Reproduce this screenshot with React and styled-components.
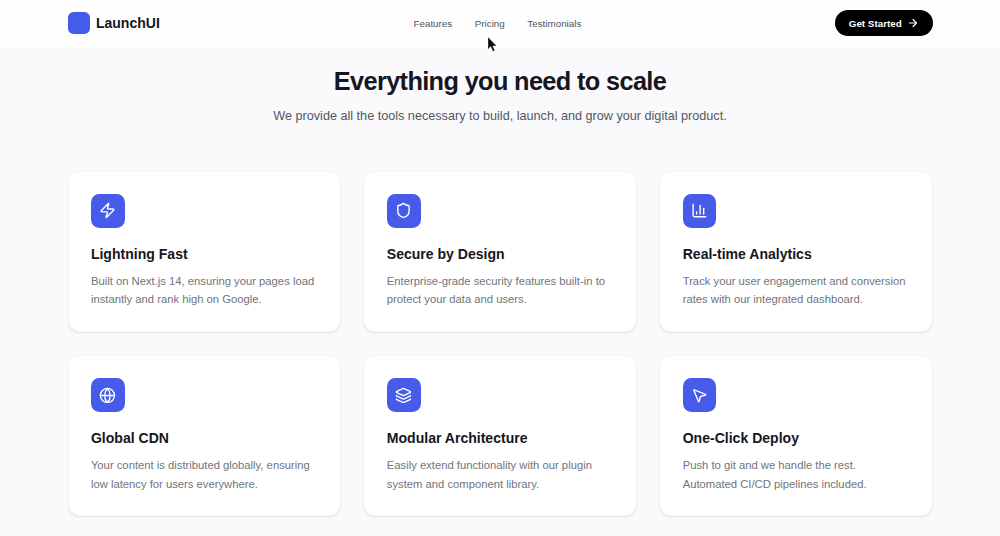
import React from "react";
import styled, { createGlobalStyle } from "styled-components";
import {
  ArrowRight,
  ChartColumn,
  Globe,
  Layers,
  MousePointer2,
  Shield,
  Zap,
} from "lucide-react";

const navLinks = ["Features", "Pricing", "Testimonials"];

const features = [
  {
    icon: Zap,
    title: "Lightning Fast",
    text: "Built on Next.js 14, ensuring your pages load instantly and rank high on Google.",
  },
  {
    icon: Shield,
    title: "Secure by Design",
    text: "Enterprise-grade security features built-in to protect your data and users.",
  },
  {
    icon: ChartColumn,
    title: "Real-time Analytics",
    text: "Track your user engagement and conversion rates with our integrated dashboard.",
  },
  {
    icon: Globe,
    title: "Global CDN",
    text: "Your content is distributed globally, ensuring low latency for users everywhere.",
  },
  {
    icon: Layers,
    title: "Modular Architecture",
    text: "Easily extend functionality with our plugin system and component library.",
  },
  {
    icon: MousePointer2,
    title: "One-Click Deploy",
    text: "Push to git and we handle the rest. Automated CI/CD pipelines included.",
  },
];

function App() {
  return (
    <>
      <GlobalStyle />
      <Header>
        <Logo>
          <LogoMark />
          LaunchUI
        </Logo>
        <Nav>
          {navLinks.map((link) => (
            <NavLink key={link} href="#">
              {link}
            </NavLink>
          ))}
        </Nav>
        <CtaButton>
          Get Started
          <ArrowRight size={12} strokeWidth={2.3} />
        </CtaButton>
      </Header>

      <Section>
        <Heading>Everything you need to scale</Heading>
        <Subtitle>
          We provide all the tools necessary to build, launch, and grow your
          digital product.
        </Subtitle>

        {/* Feature cards */}
        <Grid>
          {features.map(({ icon: Icon, title, text }) => (
            <Card key={title}>
              <IconBox>
                <Icon size={16.9} />
              </IconBox>
              <CardTitle>{title}</CardTitle>
              <CardText>{text}</CardText>
            </Card>
          ))}
        </Grid>
      </Section>

      {/* Mouse pointer */}
      <Pointer viewBox="0 0 10 17">
        <path
          d="M1 1v12.2l2.8-2.6 2 4.7 2-.9-2-4.5h3.7z"
          fill="#0b0b0d"
          stroke="#fff"
          strokeWidth="0.3"
        />
      </Pointer>
    </>
  );
}

const GlobalStyle = createGlobalStyle`
  * {
    box-sizing: border-box;
  }

  body {
    margin: 0;
    height: 536px;
    overflow: hidden;
    background: #fafafc;
    color: #151621;
    font-family: "Liberation Sans", Arial, sans-serif;
  }
`;

const Header = styled.header`
  display: flex;
  align-items: center;
  justify-content: space-between;
  height: 48px;
  padding: 0 67.3px 2px 67.8px;
  background: #fefefe;
`;

const Logo = styled.div`
  display: flex;
  align-items: center;
  gap: 5.6px;
  font-size: 14.06px;
  font-weight: 700;
`;

const LogoMark = styled.span`
  width: 22.5px;
  height: 22.5px;
  border-radius: 5.6px;
  background: #465bea;
`;

const Nav = styled.nav`
  display: flex;
  gap: 22.5px;
`;

const NavLink = styled.a`
  color: #50555f;
  font-size: 9.84px;
  text-decoration: none;
`;

const CtaButton = styled.button`
  display: flex;
  align-items: center;
  gap: 5.6px;
  height: 25.5px;
  padding: 0 13.4px 0 13.8px;
  border: none;
  border-radius: 999px;
  background: #000;
  color: #fff;
  font-family: inherit;
  font-size: 9.84px;
  font-weight: 700;
`;

const Section = styled.section`
  padding: 17px 67.5px 0;
  text-align: center;
`;

const Heading = styled.h2`
  margin: 0;
  font-size: 25.3px;
  line-height: 32px;
  font-weight: 700;
  letter-spacing: -0.025em;
`;

const Subtitle = styled.p`
  margin: 9px 0 44.5px;
  color: #50575f;
  font-size: 12.66px;
  line-height: 20px;
  letter-spacing: -0.01px;
`;

const Grid = styled.div`
  display: grid;
  grid-template-columns: repeat(3, 1fr);
  gap: 22.7px;
  text-align: left;
`;

const Card = styled.article`
  height: 161.6px;
  padding: 22.4px;
  border: 1px solid #f7f7f9;
  border-radius: 12px;
  background: #fff;
  box-shadow: 0 1px 2px rgba(20, 20, 40, 0.1);
`;

const IconBox = styled.div`
  display: flex;
  align-items: center;
  justify-content: center;
  width: 33.75px;
  height: 33.75px;
  margin-bottom: 17.2px;
  border-radius: 8.4px;
  background: #465bea;
  color: #fff;
`;

const CardTitle = styled.h3`
  margin: 0 0 7.6px;
  font-size: 14.06px;
  line-height: 19.7px;
  font-weight: 700;
`;

const CardText = styled.p`
  margin: 0;
  color: #6f747d;
  font-size: 11.25px;
  line-height: 18.28px;
`;

const Pointer = styled.svg`
  position: absolute;
  top: 36px;
  left: 487px;
  width: 10px;
  height: 17px;
`;

export default App;
